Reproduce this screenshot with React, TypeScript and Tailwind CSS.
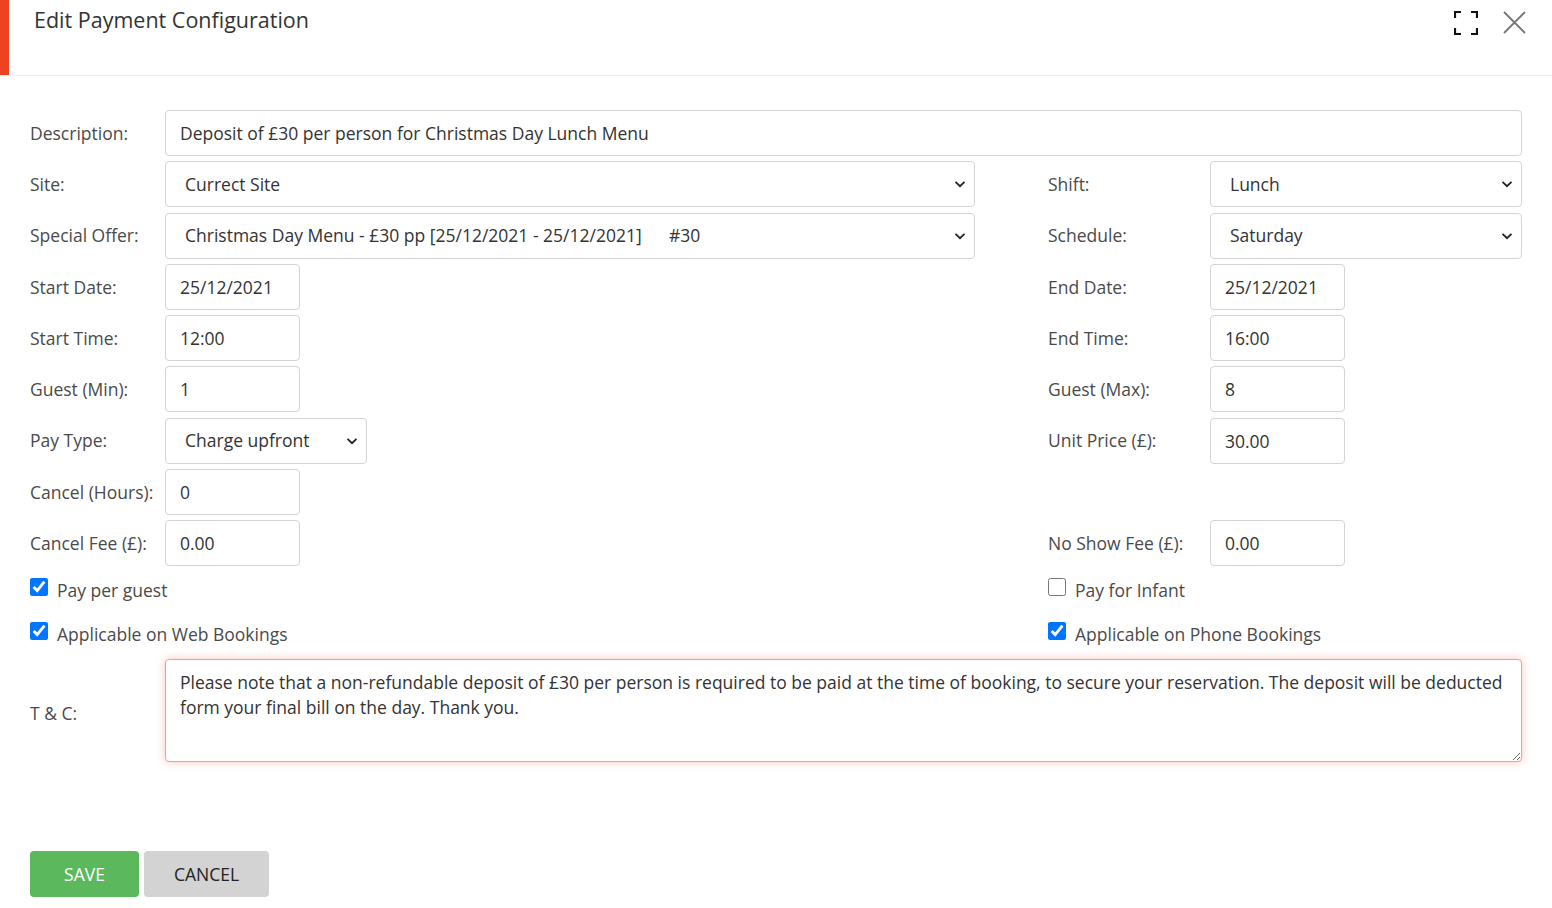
import React, { useState } from 'react';

const FONT = { fontFamily: '"Open Sans", "Noto Sans", sans-serif' };

const inputCls =
  'h-[46px] rounded-[4px] border border-[#d4d4d4] bg-white px-[14px] text-[17.5px] text-[#333] outline-none';

function Chevron() {
  return (
    <svg width="12" height="8" viewBox="0 0 12 8" className="pointer-events-none absolute right-[9px] top-1/2 -translate-y-1/2">
      <path d="M1.5 1.8 6 6.2l4.5-4.4" fill="none" stroke="#222" strokeWidth="1.8" />
    </svg>
  );
}

function Select({ value, className }: { value: string; className?: string }) {
  return (
    <div className={`relative ${className ?? ''}`}>
      <select
        defaultValue={value}
        className="h-[46px] w-full appearance-none rounded-[4px] border border-[#d4d4d4] bg-white pl-[19px] pr-8 text-[17.5px] text-[#333] outline-none"
      >
        <option>{value}</option>
      </select>
      <Chevron />
    </div>
  );
}

function Label({ children }: { children: React.ReactNode }) {
  return <div className="flex h-[46px] items-center text-[17.5px] text-[#4a4a4a]">{children}</div>;
}

function Check({ label, checked }: { label: string; checked: boolean }) {
  const [on, setOn] = useState(checked);
  return (
    <label className="flex h-[24px] items-center gap-[9px] text-[17.5px] leading-[24px] text-[#4a4a4a]">
      <input
        type="checkbox"
        checked={on}
        onChange={() => setOn(!on)}
        className="m-0 h-[18px] w-[18px] -translate-y-[3px] accent-[#0075ff]"
      />
      <span>{label}</span>
    </label>
  );
}

export default function App() {
  return (
    <div className="min-h-[908px] bg-white" style={FONT}>
      {/* header */}
      <div className="flex h-[76px] border-b border-[#ececec]">
        <div className="w-[9px] bg-[#ee4322]" />
        <h1 className="ml-[25px] mt-[4px] text-[21.5px] font-normal text-[#333]">Edit Payment Configuration</h1>
        <div className="ml-auto mr-[26px] mt-[11px] flex gap-[25px]">
          <svg width="24" height="24" viewBox="0 0 24 24" fill="none" stroke="#111" strokeWidth="2.2">
            <path d="M1 7V1h6M17 1h6v6M23 17v6h-6M7 23H1v-6" />
          </svg>
          <svg width="23" height="23" viewBox="0 0 23 23" fill="none" stroke="#777" strokeWidth="1.8">
            <path d="M1 1l21 21M22 1 1 22" />
          </svg>
        </div>
      </div>

      {/* form */}
      <div className="ml-[30px] mt-[34px] w-[1492px]">
        <div className="grid grid-cols-[135px_810px_73px_162px_312px] gap-y-[5.25px]">
          <Label>Description:</Label>
          <input className={`${inputCls} col-span-4`} defaultValue="Deposit of £30 per person for Christmas Day Lunch Menu" />

          <Label>Site:</Label>
          <Select value="Currect Site" />
          <div />
          <Label>Shift:</Label>
          <Select value="Lunch" />

          <Label>Special Offer:</Label>
          <Select value={'Christmas Day Menu - £30 pp [25/12/2021 - 25/12/2021]\u00a0\u00a0\u00a0\u00a0\u00a0\u00a0#30'} />
          <div />
          <Label>Schedule:</Label>
          <Select value="Saturday" />

          <Label>Start Date:</Label>
          <div><input className={`${inputCls} w-[135px]`} defaultValue="25/12/2021" /></div>
          <div />
          <Label>End Date:</Label>
          <div><input className={`${inputCls} w-[135px]`} defaultValue="25/12/2021" /></div>

          <Label>Start Time:</Label>
          <div><input className={`${inputCls} w-[135px]`} defaultValue="12:00" /></div>
          <div />
          <Label>End Time:</Label>
          <div><input className={`${inputCls} w-[135px]`} defaultValue="16:00" /></div>

          <Label>Guest (Min):</Label>
          <div><input className={`${inputCls} w-[135px]`} defaultValue="1" /></div>
          <div />
          <Label>Guest (Max):</Label>
          <div><input className={`${inputCls} w-[135px]`} defaultValue="8" /></div>

          <Label>Pay Type:</Label>
          <div><Select value="Charge upfront" className="w-[202px]" /></div>
          <div />
          <Label>Unit Price (£):</Label>
          <div><input className={`${inputCls} w-[135px]`} defaultValue="30.00" /></div>

          <Label>Cancel (Hours):</Label>
          <div><input className={`${inputCls} w-[135px]`} defaultValue="0" /></div>
          <div className="col-span-3" />

          <Label>Cancel Fee (£):</Label>
          <div><input className={`${inputCls} w-[135px]`} defaultValue="0.00" /></div>
          <div />
          <Label>No Show Fee (£):</Label>
          <div><input className={`${inputCls} w-[135px]`} defaultValue="0.00" /></div>
        </div>

        <div className="mt-[12px] grid grid-cols-[1018px_474px] gap-y-[20px]">
          <Check label="Pay per guest" checked />
          <Check label="Pay for Infant" checked={false} />
          <Check label="Applicable on Web Bookings" checked />
          <Check label="Applicable on Phone Bookings" checked />
        </div>

        <div className="mt-[13px] grid grid-cols-[135px_1357px] items-center">
          <div className="pt-[6px] text-[17.5px] text-[#4a4a4a]">T &amp; C:</div>
          <textarea
            className="h-[103px] rounded-[4px] border border-[#f3a08b] bg-white px-[14px] py-[10px] text-[17.5px] leading-[25px] text-[#333] shadow-[0_0_8px_rgba(240,100,70,0.38)] outline-none"
            defaultValue="Please note that a non-refundable deposit of £30 per person is required to be paid at the time of booking, to secure your reservation. The deposit will be deducted form your final bill on the day. Thank you."
          />
        </div>

        <div className="mt-[89px] flex gap-[5px]">
          <button className="h-[46px] w-[109px] rounded-[4px] bg-[#5cb85c] text-[17.5px] text-white">SAVE</button>
          <button className="h-[46px] w-[125px] rounded-[4px] bg-[#d3d3d3] text-[17.5px] text-[#222]">CANCEL</button>
        </div>
      </div>
    </div>
  );
}
